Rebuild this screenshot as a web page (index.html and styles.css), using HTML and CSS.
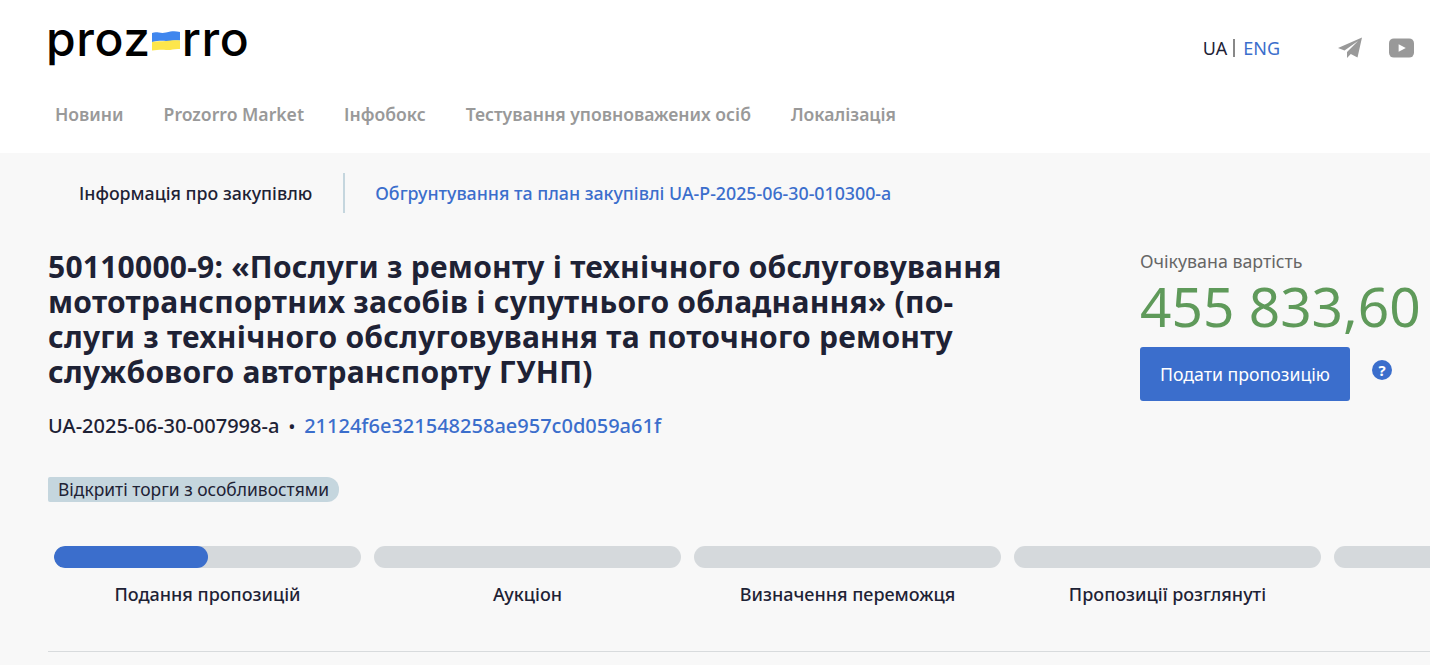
FILE: index.html
```html
<!DOCTYPE html>
<html lang="uk">
<head>
<meta charset="utf-8">
<title>Prozorro</title>
<link rel="stylesheet" href="styles.css">
</head>
<body>
<header class="header">
  <div class="topbar">
    <a class="logo"><span>proz</span><svg class="flag" viewBox="0 0 28 20" width="28" height="20"><path d="M0 2 C5 0 8 3 14 1.5 S23 0 28 1 V9.5 C22 9 19 10.500 14 10 S5 10 0 11Z" fill="#3f86ee"/><path d="M0 11 C5 10 9 10.500 14 10 S22 9 28 9.500 V18 C22 17.500 19 19.500 14 19 S5 19 0 19.500Z" fill="#fde64b"/></svg><span>rro</span></a>
    <div class="tools">
      <div class="langs"><span class="lang-current">UA</span><span class="lang-link">ENG</span></div>
      <div class="socials">
        <svg class="icon-tg" viewBox="0 0 24 22" width="24" height="22"><path d="M24 0.500 L0 11 L6.500 13.500 L20 4 L9 15 V21 L12.800 17 L19.500 20.500Z" fill="#999"/></svg>
        <svg class="icon-yt" viewBox="0 0 26 20" width="25" height="20"><rect width="26" height="20" rx="5" fill="#999"/><path d="M10 6 L17.500 10 L10 14Z" fill="#fff"/></svg>
      </div>
    </div>
  </div>
  <nav class="nav">
    <a>Новини</a><a>Prozorro Market</a><a>Інфобокс</a><a>Тестування уповноважених осіб</a><a>Локалізація</a>
  </nav>
</header>
<main class="main">
  <div class="tabs">
    <span class="tab-active">Інформація про закупівлю</span>
    <a class="tab-link">Обгрунтування та план закупівлі UA-P-2025-06-30-010300-a</a>
  </div>
  <div class="summary">
    <div class="summary-left">
      <h1 class="title">50110000-9: «Послуги з ремонту і технічного обслуговування мототранспортних засобів і супутнього обладнання» (по&shy;слуги з технічного обслуговування та поточного ремонту службового автотранспорту ГУНП)</h1>
      <div class="ids"><span>UA-2025-06-30-007998-a</span><span class="dot">•</span><a>21124f6e321548258ae957c0d059a61f</a></div>
      <div class="badge-row"><span class="badge">Відкриті торги з особливостями</span></div>
    </div>
    <aside class="summary-right">
      <div class="price-label">Очікувана вартість</div>
      <div class="price">455 833,60</div>
      <div class="actions">
        <button class="submit">Подати пропозицію</button>
        <span class="help">?</span>
      </div>
    </aside>
  </div>
  <div class="stages">
    <div class="stage"><div class="bar"><div class="bar-fill"></div></div><div class="stage-name">Подання пропозицій</div></div>
    <div class="stage"><div class="bar"></div><div class="stage-name">Аукціон</div></div>
    <div class="stage"><div class="bar"></div><div class="stage-name">Визначення переможця</div></div>
    <div class="stage"><div class="bar"></div><div class="stage-name">Пропозиції розглянуті</div></div>
    <div class="stage"><div class="bar"></div><div class="stage-name"></div></div>
  </div>
  <hr class="rule">
</main>
</body>
</html>
```
FILE: styles.css
```css
* { box-sizing: border-box; }
html, body { height: 100%; }
body {
  margin: 0;
  overflow: hidden;
  background: #f8f8f8;
  color: #1e2235;
  font-family: "Noto Sans", "Open Sans", sans-serif;
}
.header { height: 153px; background: #fff; padding: 0 16px 0 48px; }
.topbar { display: flex; justify-content: space-between; height: 96px; }
.logo {
  display: flex;
  align-items: flex-start;
  height: 70px;
  margin-left: -2px;
  padding-top: 11px;
  font-family: "Inter", sans-serif;
  font-size: 48px;
  font-weight: 500;
  line-height: 56px;
  letter-spacing: 0.6px;
  color: #000;
}
.flag { margin: 20px 2px 0 1px; }
.tools { display: flex; align-items: flex-start; padding-top: 36px; }
.langs { display: flex; align-items: center; font-size: 18px; line-height: 24px; height: 24px; }
.lang-current { padding-right: 6px; border-right: 2px solid #888; line-height: 18px; margin-right: 8px; }
.lang-link { color: #3b6ecc; }
.socials { display: flex; align-items: center; gap: 27px; margin-left: 58px; height: 24px; }
.nav { display: flex; gap: 40px; padding-left: 7px; font-size: 17.58px; font-weight: 600; line-height: 36px; color: #999; }
.main { padding: 0 0 0 48px; overflow: hidden; }
.tabs { display: flex; align-items: center; height: 40px; margin-top: 20px; font-size: 17.8px; font-weight: 500; }
.tab-active { padding: 0 31px; height: 40px; line-height: 40px; border-right: 2px solid #c5d6de; }
.tab-link { padding-left: 30px; color: #3b6ecc; }
.summary { display: flex; }
.summary-left { width: 1092px; padding-top: 36px; }
.title { width: 960px; margin: 0; font-size: 30px; font-weight: 700; line-height: 35px; letter-spacing: 0.24px; hyphens: manual; }
.ids { display: flex; gap: 9px; margin-top: 24px; font-size: 20px; font-weight: 500; line-height: 26px; }
.ids a { color: #3b6ecc; }
.dot { font-size: 18px; }
.badge-row { display: flex; margin-top: 38px; }
.badge { padding: 0 10px; background: #c5d6de; border-radius: 2px 12px 12px 2px; font-size: 17.45px; line-height: 25px; }
.summary-right { width: 290px; padding-top: 36px; }
.price-label { font-size: 17.8px; line-height: 24px; color: #666; }
.price { margin-top: 3px; font-size: 55px; line-height: 60px; color: #5f9a5a; white-space: nowrap; }
.actions { display: flex; align-items: flex-start; gap: 22px; margin-top: 11px; }
.submit { width: 210px; height: 54px; border: 0; border-radius: 3px; background: #3b6ecc; color: #fff; font: 400 17.7px "Noto Sans", sans-serif; }
.help { width: 20px; height: 20px; margin-top: 13px; border-radius: 50%; background: #3b6ecc; color: #fff; font-size: 15px; font-weight: 700; line-height: 20px; text-align: center; }
.stages { display: flex; gap: 13px; width: 1500px; margin-top: 44px; padding-left: 6px; }
.stage { flex: 0 0 307px; }
.bar { height: 22px; background: #d5d9dc; border-radius: 11px; overflow: hidden; }
.bar-fill { width: 154px; height: 100%; background: #3b6ecc; border-radius: 11px; }
.stage-name { margin-top: 14px; font-size: 18px; font-weight: 500; line-height: 24px; text-align: center; }
.rule { height: 1px; margin: 45px 0 0; border: 0; background: #d8dbdd; }
```
